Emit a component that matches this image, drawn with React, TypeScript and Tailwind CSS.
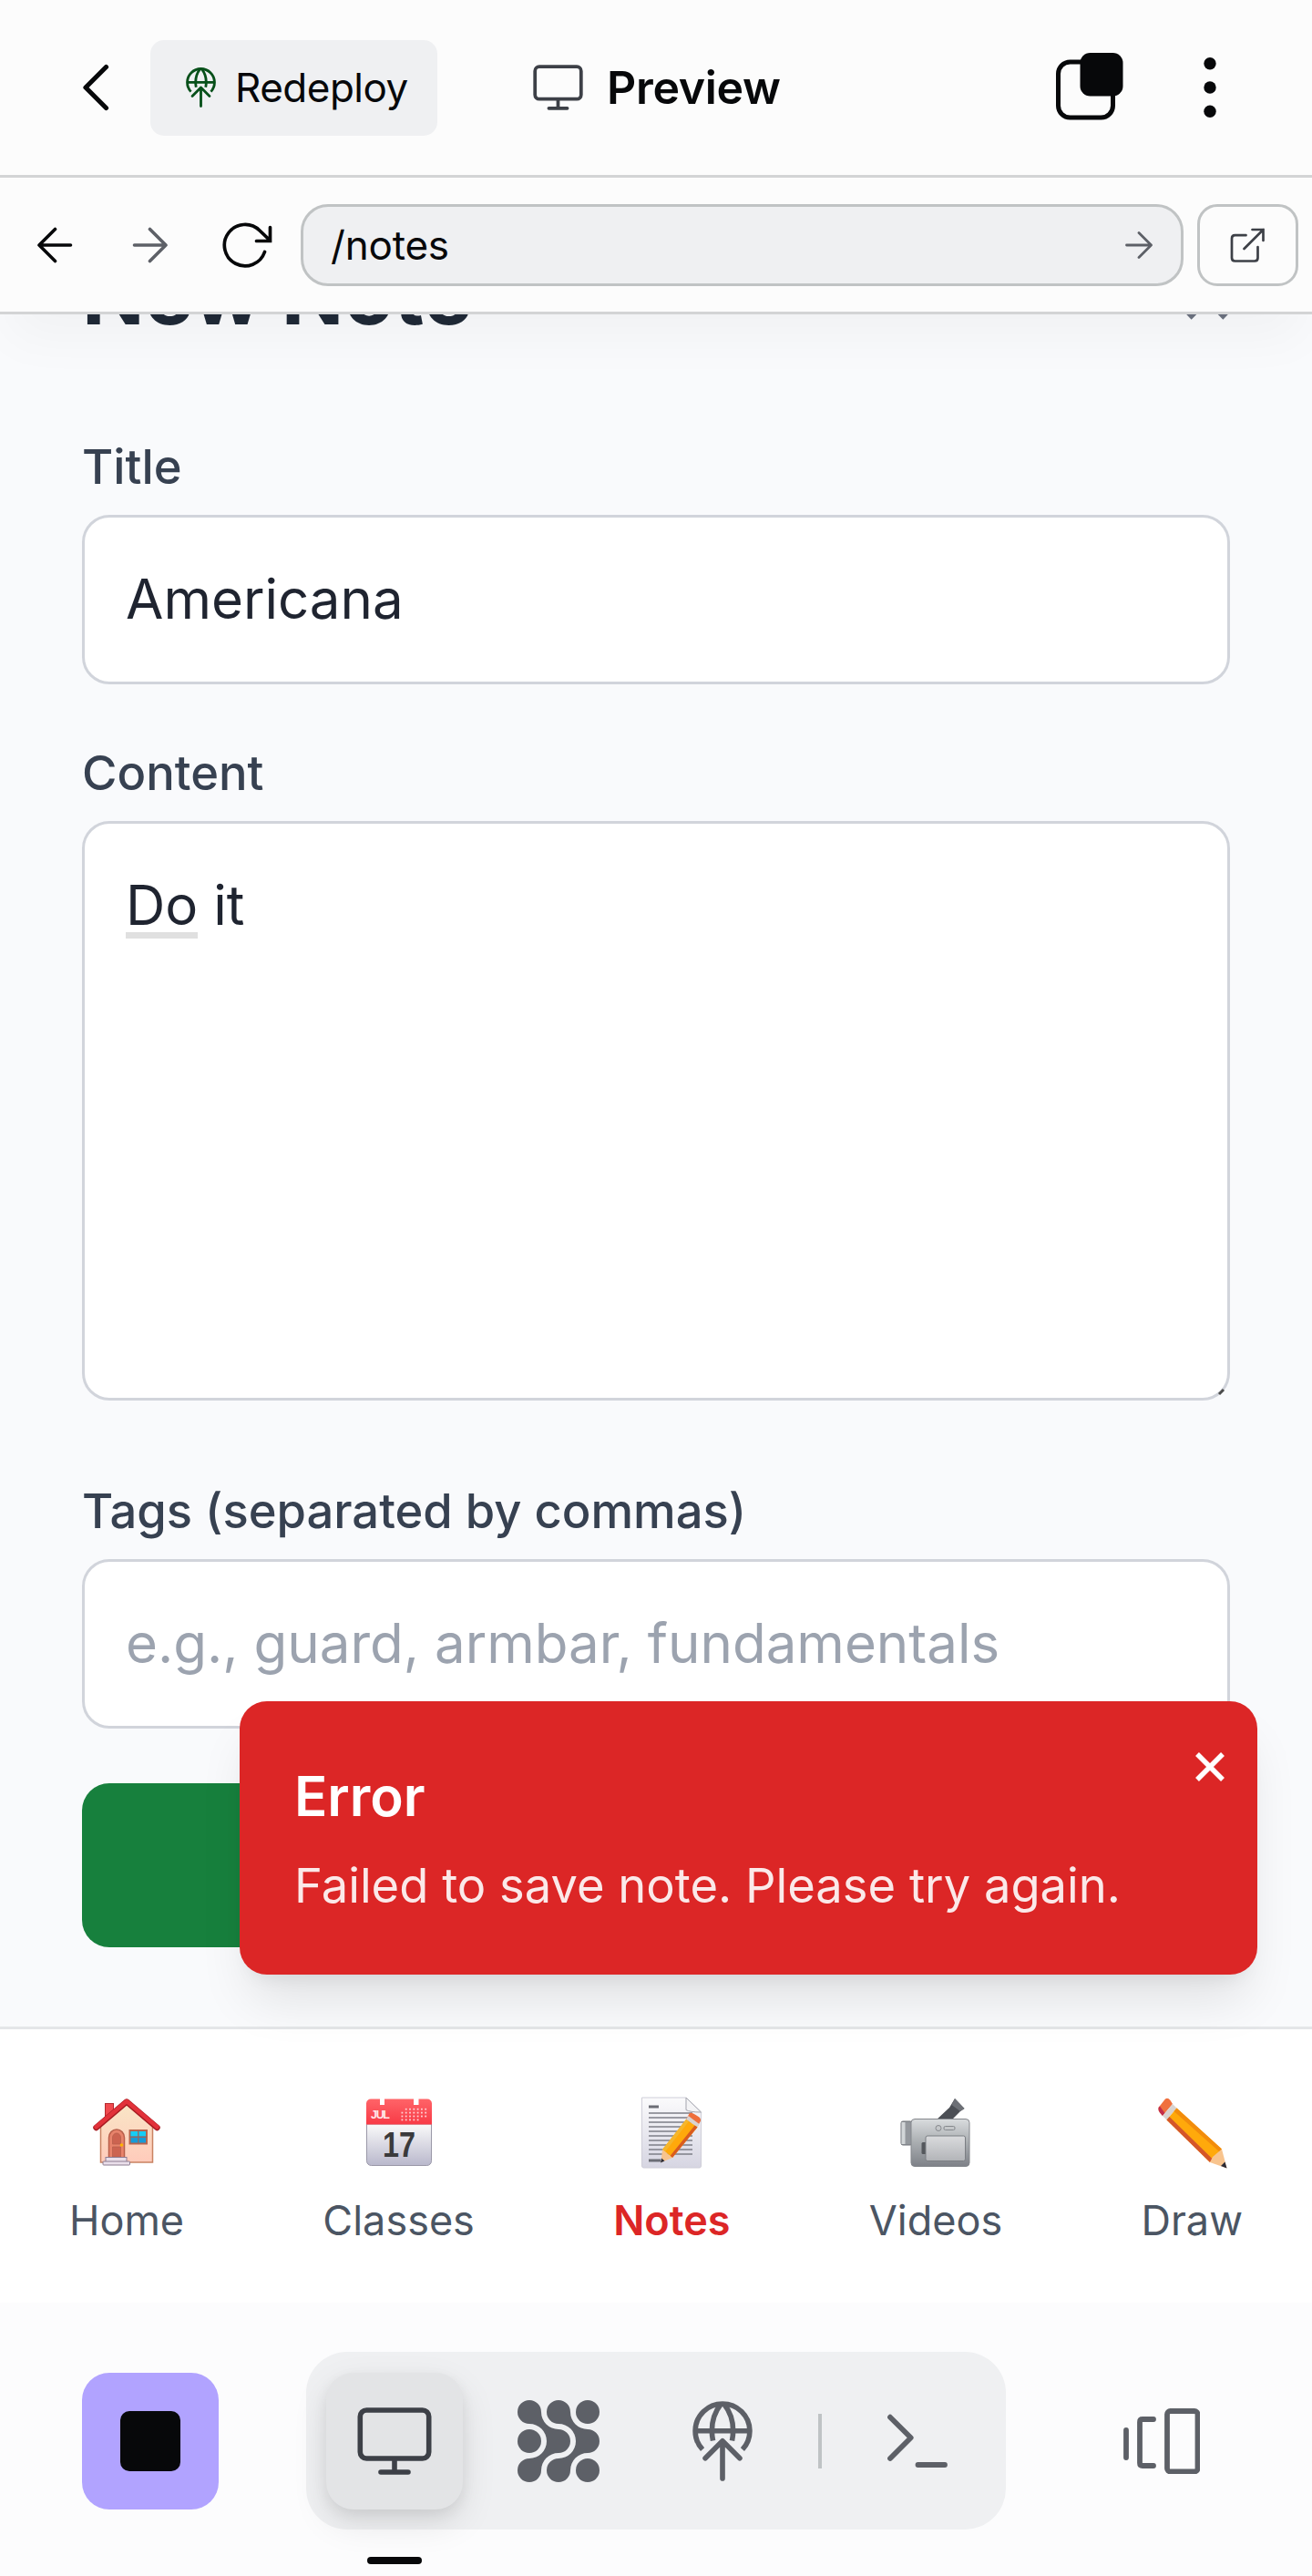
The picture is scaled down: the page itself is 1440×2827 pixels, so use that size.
import type { ReactNode } from "react";

function GlobeUp({ className }: { className: string }) {
  return (
    <svg viewBox="0 0 198 265" className={className} fill="none" stroke="currentColor" strokeWidth="17">
      <path d="M33 160.2A90 90 0 1 1 165 160.2M9 98.5H189" />
      <path d="M94 10C74 35 64 65 64 98Q64 115 67.500 131M104 10C124 35 134 65 134 98Q134 115 130.500 131" />
      <path d="M42 189L99 132L156 189M99 134V256" strokeLinecap="round" strokeLinejoin="round" />
    </svg>
  );
}

function Monitor({ className }: { className: string }) {
  return (
    <svg viewBox="0 0 82 74" className={className} fill="none" stroke="currentColor" strokeWidth="5.600" strokeLinecap="round">
      <rect x="3.300" y="3" width="75.400" height="53" rx="7" />
      <path d="M41 57V69M26 71H56" />
    </svg>
  );
}

function CellGrid({ className }: { className: string }) {
  return (
    <svg viewBox="0 0 270 270" className={className} fill="currentColor">
      <path d="M39 0A39 39 0 0 1 78 39A57 57 0 0 0 135 96A39 39 0 0 1 135 174A57 57 0 0 0 78 231A39 39 0 1 1 39 192A57 57 0 0 0 39 78A39 39 0 0 1 39 0Z" />
      <path d="M135 0A39 39 0 0 1 174 39A57 57 0 0 0 231 96A39 39 0 0 1 231 174A57 57 0 0 0 174 231A39 39 0 1 1 135 192A57 57 0 0 0 135 78A39 39 0 0 1 135 0Z" />
      <circle cx="231" cy="39" r="39" />
      <circle cx="39" cy="135" r="39" />
      <circle cx="231" cy="231" r="39" />
    </svg>
  );
}

function House() {
  return (
    <svg viewBox="0 0 80 80" className="h-20 w-20">
      <defs>
        <linearGradient id="wall" x1="0" y1="0" x2="0" y2="1">
          <stop offset="0" stopColor="#f9e6c6" />
          <stop offset="1" stopColor="#ffcbbb" />
        </linearGradient>
      </defs>
      <rect x="16.500" y="8.500" width="9" height="22" fill="#f04a4f" stroke="#b52a2e" />
      <path d="M11.500 32L40 8L68.500 32V73H11.500Z" fill="url(#wall)" stroke="#c98262" strokeWidth="1.500" />
      <path d="M6.500 35L40 6.500L73.500 35" fill="none" stroke="#a81c22" strokeWidth="6.500" strokeLinecap="round" strokeLinejoin="round" />
      <path d="M6.500 34.300L40 6L73.500 34.300" fill="none" stroke="#e2323a" strokeWidth="4.500" strokeLinecap="round" strokeLinejoin="round" />
      <path d="M20.500 68V46a8.500 9 0 0 1 17 0V68Z" fill="#e8836b" stroke="#b8604b" strokeWidth="1.500" />
      <path d="M24.500 53V46a4.500 5 0 0 1 9 0V53ZM24.500 56H33.500V67H24.500Z" fill="#cc6350" stroke="#b8604b" strokeWidth=".8" />
      <circle cx="34.500" cy="54" r="1.800" fill="#ffb400" />
      <rect x="43.500" y="38" width="18.500" height="14.500" fill="#159bd8" stroke="#b5654e" strokeWidth="2" />
      <path d="M44.500 39H61V44.500H44.500Z" fill="#16cdf5" />
      <path d="M52.800 38V52.500M43.500 45.200H62" stroke="#8e6a66" strokeWidth="1.400" />
      <rect x="17" y="67.500" width="23" height="5" fill="#eadfea" stroke="#8d7d92" />
      <rect x="14" y="72" width="29.500" height="4" rx=".8" fill="#eadfea" stroke="#8d7d92" />
    </svg>
  );
}

function Calendar() {
  const dots: ReactNode[] = [];
  for (let r = 0; r < 4; r++)
    for (let c = r === 0 ? 1 : 0; c < (r === 3 ? 5 : 7); c++)
      dots.push(<rect key={`${r}-${c}`} x={42.500 + c * 4.300} y={13.800 + r * 3.900} width="1.800" height="1.800" fill="#ffd0d3" />);
  return (
    <svg viewBox="0 0 80 80" className="h-20 w-20">
      <defs>
        <linearGradient id="page" x1="0" y1="0" x2="0" y2="1">
          <stop offset="0" stopColor="#fafafa" />
          <stop offset="1" stopColor="#b9b8cc" />
        </linearGradient>
        <linearGradient id="band" x1="0" y1="0" x2="0" y2="1">
          <stop offset="0" stopColor="#ff6468" />
          <stop offset="1" stopColor="#f83a46" />
        </linearGradient>
      </defs>
      <path d="M4.500 31H75.500V71.500a5 5 0 0 1-5 5H9.500a5 5 0 0 1-5-5Z" fill="url(#page)" stroke="#9a98a8" />
      <path d="M4 31.500V8.500a5 5 0 0 1 5-5H19V10H24V3.500H56V10H61.500V3.500H71a5 5 0 0 1 5 5V31.500Z" fill="url(#band)" />
      {dots}
      <text x="9" y="24.500" fontFamily="Liberation Sans" fontWeight="700" fontSize="12.500" textLength="21" fill="#ffe9ea">JUL</text>
      <text x="22" y="67" fontFamily="Liberation Sans" fontWeight="700" fontSize="38" textLength="36" lengthAdjust="spacingAndGlyphs" fill="#3a3a3c">17</text>
    </svg>
  );
}

function PencilShape() {
  return (
    <>
      <path d="M3.500 13Q3 16 5 18.500L8 22L19 9L16.500 5Q13.500 1 10.500 4Z" fill="#f0703d" />
      <path d="M3.500 13Q3 16 5 18.500L8 22L10.500 19L5 11.500Z" fill="#c22e4b" />
      <path d="M8 22L19 9L23.500 13.500L12.500 26.500Z" fill="#d9d3d0" />
      <path d="M12.500 26.500L23.500 13.500L73 58.500L60 73Z" fill="#ffa90b" />
      <path d="M12.500 26.500L15.500 23L63 69.500L60 73Z" fill="#d4562a" />
      <path d="M20.500 17L23.500 13.500L73 58.500L70.500 61.500Z" fill="#f28c0c" />
      <path d="M60 73L63 67L73 58.500L78.500 79.500Z" fill="#f8c48e" />
      <path d="M72 77L76.500 72.500L78.500 79.500Z" fill="#2b2b35" />
    </>
  );
}

function Memo() {
  return (
    <svg viewBox="0 0 80 80" className="h-20 w-20">
      <defs>
        <linearGradient id="sheet" x1="0" y1="0" x2="0" y2="1">
          <stop offset="0" stopColor="#fbfbfc" />
          <stop offset="1" stopColor="#d6d5e2" />
        </linearGradient>
      </defs>
      <path d="M7.500 2H56L72.500 18V77a2 2 0 0 1-2 2H9.500a2 2 0 0 1-2-2Z" fill="url(#sheet)" stroke="#cfced8" />
      <path d="M56 2V15.500Q60 18 72.500 18Z" fill="#f4f4f6" stroke="#a3a4ad" />
      <path d="M15 12H26M15 71H28" stroke="#6b6d75" strokeWidth="2.800" />
      <path d="M15 19H63M15 24H63M15 29H63M15 34H63M15 39H63M15 44H63M15 49H63M15 54H63M15 59H63M15 64H63" stroke="#7d7f88" strokeWidth="1.300" />
      <path d="M59.500 19.500Q61 18 64 19.500L70.500 23.500Q73 26 71.500 28.500L68.500 34L56 26Z" fill="#ef6f3c" />
      <path d="M56 26L58.500 22L70.500 31L68.500 34.500Z" fill="#d9d3d0" />
      <path d="M56 26L68.500 34.500L41 68L30 59Z" fill="#ffa90b" />
      <path d="M56 26L59 28L33 61.500L30 59Z" fill="#f5b62c" />
      <path d="M65.500 32.500L68.500 34.500L41 68L38.500 66Z" fill="#d95b1f" />
      <path d="M30 59L41 68L28.500 73Z" fill="#f8c48e" />
      <path d="M29 68.500L32.500 71.500L28 73.500Z" fill="#2b2b35" />
    </svg>
  );
}

function Camcorder() {
  return (
    <svg viewBox="0 0 80 80" className="h-20 w-20">
      <defs>
        <linearGradient id="body" x1="0" y1="0" x2="0" y2="1">
          <stop offset="0" stopColor="#d9dcde" />
          <stop offset=".5" stopColor="#a9adb0" />
          <stop offset="1" stopColor="#7e8188" />
        </linearGradient>
        <linearGradient id="flap" x1="0" y1="0" x2="0" y2="1">
          <stop offset="0" stopColor="#dadbdd" />
          <stop offset="1" stopColor="#b2b4b8" />
        </linearGradient>
      </defs>
      <path d="M40 27L55 13L61 3L71.500 14L67 17L57 27Z" fill="#4c4f55" />
      <path d="M61 3L71.500 14L67 17L57.500 10Z" fill="#6d7076" />
      <rect x="2" y="28" width="12" height="26" rx="2" fill="#94989d" stroke="#6f7378" />
      <rect x="2.500" y="29" width="4" height="24" fill="#d2d6d8" />
      <rect x="13" y="25.500" width="64" height="52" rx="4" fill="url(#body)" stroke="#84878c" />
      <circle cx="43" cy="35.500" r="3" fill="#c4c7c9" stroke="#85888d" />
      <rect x="49" y="33.500" width="12" height="4" rx="1.500" fill="#c4c7c9" stroke="#85888d" />
      <rect x="24.500" y="51" width="6" height="13" rx="1.500" fill="#55585d" />
      <rect x="29" y="44" width="43.500" height="27.500" rx="2" fill="url(#flap)" stroke="#7b7e83" />
    </svg>
  );
}

function Pencil() {
  return (
    <svg viewBox="0 0 80 80" className="h-20 w-20">
      <PencilShape />
    </svg>
  );
}

const tabs = [
  { label: "Home", icon: <House /> },
  { label: "Classes", icon: <Calendar /> },
  { label: "Notes", icon: <Memo />, active: true },
  { label: "Videos", icon: <Camcorder /> },
  { label: "Draw", icon: <Pencil /> },
];

const label = "block h-[75px] text-[52.5px] leading-[75px] font-medium text-[#374151] mb-[15px] whitespace-nowrap";
const field = "block h-[186px] w-full rounded-[30px] border-[3px] border-[#d1d4db] bg-white px-[45px] pb-[2px] text-[60px] text-[#1f2430] placeholder:text-[#9ca3af]";

export default function App() {
  return (
    <div className="relative flex h-[2827px] w-[1440px] flex-col overflow-hidden bg-[#fcfcfd] font-['Inter',sans-serif] text-[#07080a]">
      <header className="flex h-[195px] shrink-0 items-center border-b-[3px] border-[#d3d4d5] bg-[#fcfcfc]">
        <svg viewBox="0 0 30 52" className="ml-[90px] h-[52px] w-[30px]" fill="none" stroke="currentColor" strokeWidth="5.200" strokeLinecap="round" strokeLinejoin="round">
          <path d="M26.500 3.500L4 26L26.500 48.500" />
        </svg>
        <button className="ml-[45px] flex h-[105px] w-[315px] items-center rounded-[15px] bg-[#eff0f2] pl-[39px]">
          <GlobeUp className="h-[44px] w-[33px] text-[#07501a]" />
          <span className="ml-[21px] text-[44px] leading-none tracking-[-0.5px]">Redeploy</span>
        </button>
        <Monitor className="ml-[105px] h-[50px] w-[55px] text-[#3d4047]" />
        <span className="ml-[26px] w-[190px] text-[50px] leading-none font-semibold tracking-[-0.3px]">Preview</span>
        <svg viewBox="0 0 74 74" className="mb-[2px] ml-[303px] h-[74px] w-[74px]" fill="none">
          <rect x="2.500" y="10" width="60" height="61" rx="13" stroke="currentColor" strokeWidth="5" />
          <rect x="26.500" y="0" width="47" height="47.500" rx="11" fill="currentColor" />
        </svg>
        <svg viewBox="0 0 14 66" className="ml-[88px] h-[66px] w-[14px]" fill="currentColor">
          <circle cx="7" cy="6.700" r="6.700" />
          <circle cx="7" cy="33" r="6.700" />
          <circle cx="7" cy="59.300" r="6.700" />
        </svg>
      </header>

      <div className="relative z-10 flex h-[150px] shrink-0 items-center border-b-[3px] border-[#d3d4d5] bg-[#fcfcfc] shadow-[0_37px_56px_-11px_rgba(0,0,0,0.035)]">
        <svg viewBox="0 0 40 40" className="ml-10 h-10 w-10" fill="none" stroke="currentColor" strokeWidth="3.600" strokeLinecap="round" strokeLinejoin="round">
          <path d="M20.500 2.500L3 20L20.500 37.500M3 20H37.500" />
        </svg>
        <svg viewBox="0 0 40 40" className="ml-[65px] h-10 w-10 text-[#5d6067]" fill="none" stroke="currentColor" strokeWidth="3.600" strokeLinecap="round" strokeLinejoin="round">
          <path d="M19.500 2.500L37 20L19.500 37.500M37 20H2.500" />
        </svg>
        <svg viewBox="0 0 56 50" className="ml-[59px] h-[50px] w-14" fill="none" stroke="currentColor" strokeWidth="3.700" strokeLinecap="round">
          <path d="M46.500 32.500A22.700 22.700 0 1 1 41 9L52.500 20M52.500 5.500V20.500H37.500" />
        </svg>
        <div className="ml-[30px] flex h-[90px] w-[969px] items-center justify-between rounded-[30px] border-[3px] border-[#c0c3c4] bg-[#eff0f2] pr-[31px] pl-[30px]">
          <span className="text-[44px] leading-none tracking-[-0.2px]">/notes</span>
          <svg viewBox="0 0 30 30" className="h-[30px] w-[30px] text-[#5d6067]" fill="none" stroke="currentColor" strokeWidth="2.800" strokeLinecap="round" strokeLinejoin="round">
            <path d="M15 1.500L28.500 15L15 28.500M28.500 15H1.500" />
          </svg>
        </div>
        <button className="ml-[15px] flex h-[90px] w-[111px] items-center justify-center rounded-[22px] border-[3px] border-[#c0c3c4]">
          <svg viewBox="0 0 38 38" className="mr-[2px] h-[38px] w-[38px] text-[#3d4047]" fill="none" stroke="currentColor" strokeWidth="2.700" strokeLinecap="round">
            <path d="M17.500 8.200H5.500Q2 8.200 2 11.700V33Q2 36.500 5.500 36.500H27Q30.500 36.500 30.500 33V21M15.500 23L36.500 2M24.500 2H36.500V14" />
          </svg>
        </button>
      </div>

      <main className="h-[1879px] shrink-0 overflow-hidden bg-[#f9fafc] px-[90px]">
        <div className="-mt-[81px] mb-[91px] flex h-[120px] items-center justify-between">
          <h1 className="text-[90px] leading-[120px] font-bold whitespace-nowrap text-[#1f2937]">New Note</h1>
          <svg viewBox="0 0 46 46" className="mt-2 mr-[2px] h-[46px] w-[46px] text-[#6b7280]" stroke="currentColor" strokeWidth="7.500">
            <path d="M3 3L43 43M43 3L3 43" />
          </svg>
        </div>
        <label className={label}>Title</label>
        <input className={field} defaultValue="Americana" />
        <label className={`${label} mt-[60px]`}>Content</label>
        <div className="relative h-[636px] rounded-[30px] border-[3px] border-[#d1d4db] bg-white px-[45px] pt-[44px] text-[60px] leading-[90px] text-[#1f2430]">
          <span className="relative inline-block">
            Do
            <span className="absolute top-[75px] left-0 h-[7px] w-full bg-[#e0e0e0]" />
          </span>{" "}
          it
          <span className="absolute right-[3px] bottom-[5px] h-[3px] w-[7px] -rotate-45 bg-[#4b4b4b]" />
        </div>
        <label className={`${label} mt-[84px]`}>Tags (separated by commas)</label>
        <input className={field} placeholder="e.g., guard, armbar, fundamentals" />
        <button className="mt-[60px] block h-[180px] w-full rounded-[30px] bg-[#17803d]" aria-label="Save note" />
      </main>

      <nav className="flex h-[303px] shrink-0 items-start justify-between border-t-[3px] border-[#e4e6e8] bg-white px-[76px] pt-[73px]">
        {tabs.map((t) => (
          <div key={t.label} className="flex flex-col items-center">
            {t.icon}
            <span
              className={
                t.active
                  ? "mt-[27px] text-[45px] leading-[60px] font-semibold text-[#dc2626]"
                  : "mt-[27px] text-[45px] leading-[60px] text-[#4b5563]"
              }
            >
              {t.label}
            </span>
          </div>
        ))}
      </nav>

      <footer className="flex h-[300px] shrink-0 items-start pt-[54px] pl-[90px] text-[#5d6067]">
        <button className="mt-[23px] flex h-[150px] w-[150px] items-center justify-center rounded-[30px] bg-[#b1a3ff]">
          <span className="h-[66px] w-[66px] rounded-[10px] bg-[#07080a]" />
        </button>
        <div className="ml-24 flex h-[195px] w-[768px] items-center gap-[30px] rounded-[45px] bg-[#eff0f2] pl-[22px]">
          <button className="relative flex h-[150px] w-[150px] items-center justify-center rounded-[30px] bg-[#e3e4e6] text-[#3d4047] shadow-[0_15px_38px_rgba(0,0,0,0.1),0_6px_15px_rgba(0,0,0,0.07)]">
            <Monitor className="h-[74px] w-[82px]" />
            <span className="absolute top-[202px] left-[45px] h-2 w-[60px] rounded-full bg-[#07080a]" />
          </button>
          <div className="flex h-[150px] w-[150px] items-center justify-center">
            <CellGrid className="h-[90px] w-[90px]" />
          </div>
          <div className="flex h-[150px] w-[150px] items-center justify-center">
            <GlobeUp className="h-[88px] w-[66px]" />
          </div>
          <div className="h-[60px] w-1 bg-[#bfc3c5]" />
          <div className="flex h-[150px] w-[150px] items-center justify-center">
            <svg viewBox="0 0 66 60" className="h-[60px] w-[66px]" fill="none" stroke="currentColor" strokeWidth="5.800" strokeLinecap="round" strokeLinejoin="round">
              <path d="M3 3.700L25.700 26.300L3 49M33.500 56H63" />
            </svg>
          </div>
        </div>
        <svg viewBox="0 0 84 72" className="mt-[62px] ml-[129px] h-[72px] w-[84px]" fill="none" stroke="currentColor" strokeWidth="5.800" strokeLinecap="round">
          <path d="M3 24V54M33 12H21Q18 12 18 15V60Q18 63 21 63H33" />
          <rect x="48" y="3" width="33.500" height="66.500" rx="3.500" />
        </svg>
      </footer>

      <div className="absolute top-[1867px] left-[263px] z-20 h-[300px] w-[1117px] rounded-[30px] bg-[#dc2626] px-[60px] pt-[59px] text-white shadow-[0_37px_56px_-11px_rgba(0,0,0,0.1),0_15px_22px_-15px_rgba(0,0,0,0.1)]">
        <div className="text-[60px] leading-[90px] font-semibold">Error</div>
        <div className="mt-4 text-[52.5px] leading-[75px] whitespace-nowrap opacity-90">Failed to save note. Please try again.</div>
        <svg viewBox="0 0 32 32" className="absolute top-14 right-9 h-8 w-8" stroke="currentColor" strokeWidth="5.500">
          <path d="M2 2L30 30M30 2L2 30" />
        </svg>
      </div>
    </div>
  );
}
